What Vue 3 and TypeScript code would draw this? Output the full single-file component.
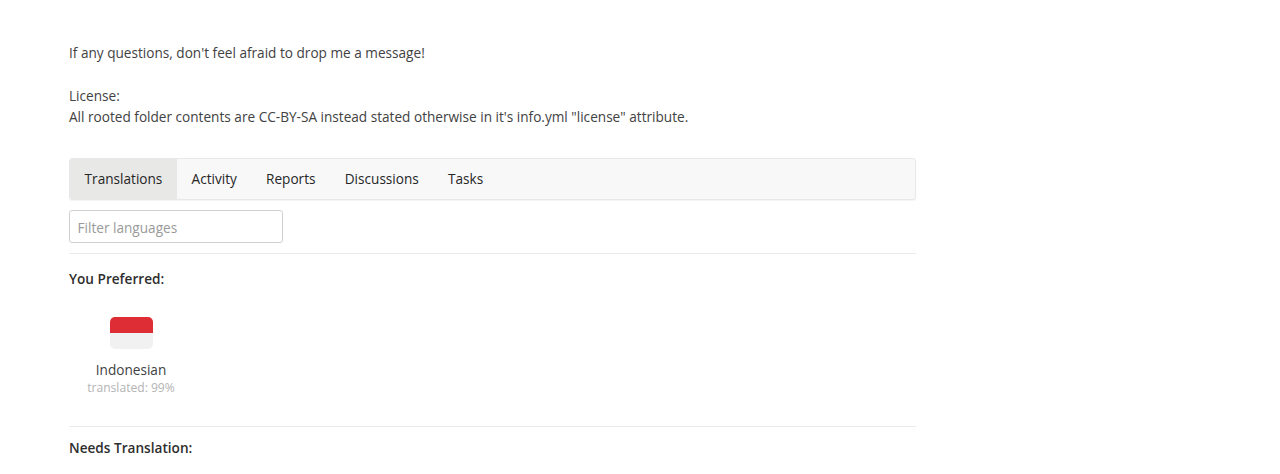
<template>
  <main class="page">
    <p class="intro">If any questions, don't feel afraid to drop me a message!</p>
    <p class="license">
      License:<br />
      All rooted folder contents are CC-BY-SA instead stated otherwise in it's info.yml "license" attribute.
    </p>

    <nav class="tabs">
      <a
        v-for="tab in tabs"
        :key="tab"
        class="tab"
        :class="{ active: tab === activeTab }"
      >{{ tab }}</a>
    </nav>

    <input class="filter" type="text" placeholder="Filter languages" />
    <hr class="divider" />

    <h4 class="section-title">You Preferred:</h4>
    <div class="languages">
      <div v-for="lang in preferred" :key="lang.name" class="language">
        <div class="flag">
          <span class="flag-top"></span>
          <span class="flag-bottom"></span>
        </div>
        <div class="lang-name">{{ lang.name }}</div>
        <div class="lang-progress">translated: {{ lang.progress }}%</div>
      </div>
    </div>
    <hr class="divider second" />

    <h4 class="section-title needs">Needs Translation:</h4>
  </main>
</template>

<script setup lang="ts">
const tabs = ['Translations', 'Activity', 'Reports', 'Discussions', 'Tasks']
const activeTab = 'Translations'

const preferred = [{ name: 'Indonesian', progress: 99 }]
</script>

<style scoped>
.page {
  width: 847px;
  margin-left: 69px;
  padding-top: 42px;
  font-family: "Open Sans", sans-serif;
  font-size: 13.62px;
  line-height: 21px;
  color: #424242;
}

.intro {
  margin: 0 0 22px;
}

.license {
  margin: 0 0 31px;
}

.tabs {
  display: flex;
  height: 42px;
  box-sizing: border-box;
  background: #f8f8f8;
  border: 1px solid #e8e8e8;
  border-radius: 3px;
  box-shadow: 0 1px 1px rgba(34, 36, 38, 0.05);
}

.tab {
  display: flex;
  align-items: center;
  padding: 0 14.6px 2px;
  color: #262626;
}

.tab.active {
  background: #e8e8e6;
  border-radius: 2px 0 0 2px;
}

.filter {
  display: block;
  width: 214px;
  height: 33px;
  box-sizing: border-box;
  margin-top: 10px;
  padding: 1px 7.5px 0;
  border: 1px solid #d0d0d0;
  border-radius: 3px;
  font: inherit;
  color: #424242;
  outline: none;
}

.filter::placeholder {
  color: #9a9a9a;
  opacity: 1;
}

.divider {
  height: 1px;
  margin: 10px 0 0;
  border: 0;
  background: #ebebeb;
}

.section-title {
  margin: 14px 0 0;
  font-size: 13.62px;
  font-weight: 600;
  line-height: 21px;
  color: #2e2e2e;
}

.languages {
  display: flex;
  margin-top: 28px;
}

.language {
  width: 124px;
  text-align: center;
}

.flag {
  display: flex;
  flex-direction: column;
  width: 43px;
  height: 32px;
  margin: 0 auto 10px;
  overflow: hidden;
  border-radius: 5px;
}

.flag-top {
  flex: 1;
  background: #df2d35;
}

.flag-bottom {
  flex: 1;
  background: #f1f1f1;
}

.lang-name {
  line-height: 21px;
}

.lang-progress {
  margin-top: -1px;
  font-size: 12.1px;
  line-height: 18px;
  color: #b4b4b4;
}

.divider.second {
  margin-top: 29px;
}

.needs {
  margin-top: 10px;
}
</style>

<style>
html,
body {
  margin: 0;
  height: 100%;
  overflow: hidden;
  background: #fff;
}
</style>
